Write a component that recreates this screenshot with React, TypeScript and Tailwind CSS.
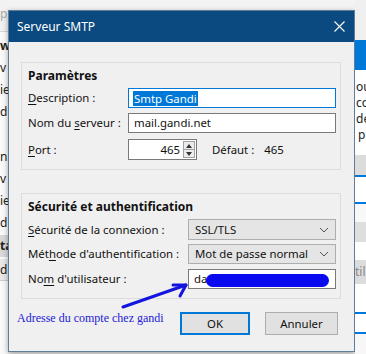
import React from "react";

const ui = { fontFamily: '"Noto Sans", "Open Sans", sans-serif' };

function Key({ children }: { children: React.ReactNode }) {
  return <span className="underline underline-offset-2">{children}</span>;
}

function Chevron() {
  return (
    <svg width="10" height="6" viewBox="0 0 10 6" className="ml-auto shrink-0">
      <path d="M1 1 L5 5 L9 1" fill="none" stroke="#555" strokeWidth="1" />
    </svg>
  );
}

function Select({ value, h }: { value: string; h: string }) {
  return (
    <div className={`flex items-center w-[148px] ${h} bg-[#e5e5e5] border border-[#adadad] pl-[6px] pr-[6px] text-[#111]`}>
      <span className="whitespace-nowrap">{value}</span>
      <Chevron />
    </div>
  );
}

function BgLeft() {
  const rows: [number, string, string][] = [
    [22, "ws", "font-bold"],
    [22, "v", ""],
    [22, "ie", ""],
    [22, "dr", ""],
    [45, "n", ""],
    [22, "v", ""],
    [22, "ie", ""],
    [22, "dr", ""],
  ];
  return (
    <div className="w-[8px] h-full bg-[#fafafa] overflow-hidden flex flex-col text-[12px] text-[#222] leading-[16px]" style={ui}>
      <div className="h-[32px] bg-[#f2f2f2] border-b border-[#d8d8d8] text-[#aaa] pt-[6px]">pt</div>
      <div className="flex flex-col">
        {rows.map(([h, t, c], i) => (
          <div key={i} className={`flex items-end ${c}`} style={{ height: h }}>
            {t}
          </div>
        ))}
      </div>
      <div className="h-[22px] flex items-center mt-[4px] bg-[#d9d9d9] font-bold">ta</div>
      <div className="h-[22px] flex items-center mt-[2px] bg-[#e8e8e8] border-b border-[#ccc]">de</div>
    </div>
  );
}

function BgRight() {
  return (
    <div className="w-[11px] h-full bg-[#f7f7f7] overflow-hidden flex flex-col text-[12px] text-[#222] leading-[16px]" style={ui}>
      <div className="h-[40px] bg-[#f0f0f0]" />
      <div className="h-[30px] bg-[#0078d7]" />
      <div className="bg-white pt-[9px] pl-[1px] pb-[12px] flex flex-col">
        <div>ou</div>
        <div>co</div>
        <div>de</div>
        <div className="pl-[2px]">p</div>
      </div>
      <div className="h-[22px] bg-[#dcdcdc] border-b-2 border-[#0078d7]" />
      <div className="h-[27px] bg-white border-b-2 border-[#0078d7]" />
      <div className="h-[18px] bg-[#f8f8f8]" />
      <div className="h-[20px] bg-[#dedede]" />
      <div className="h-[18px] bg-white" />
      <div className="h-[24px] bg-[#dcdcdc] text-[#888] flex items-center">til</div>
      <div className="h-[30px] bg-white border-b-2 border-[#0078d7]" />
      <div className="h-[20px] bg-white border-b-2 border-[#0078d7]" />
    </div>
  );
}

export default function App() {
  return (
    <div className="w-[366px] h-[354px] flex overflow-hidden bg-[#f3f3f3] relative">
      <BgLeft />

      {/* dialog */}
      <div className="w-[347px] mt-[10px] h-[342px] flex flex-col border border-[#5f7d9c] bg-[#f0f0f0] shadow-[0_2px_6px_rgba(0,0,0,0.35)]" style={ui}>
        {/* title bar */}
        <div className="h-[31px] bg-[#0a4a80] flex items-center pl-[8px] pr-[9px] text-white text-[12px]">
          <span>Serveur SMTP</span>
          <svg width="11" height="11" viewBox="0 0 11 11" className="ml-auto">
            <path d="M0.5 0.5 L10.5 10.5 M10.5 0.5 L0.5 10.5" stroke="white" strokeWidth="1.1" />
          </svg>
        </div>

        <div className="flex flex-col px-[12px] pt-[20px] text-[11.4px] text-[#111]">
          {/* group 1 */}
          <div className="w-[320px] h-[108px] border border-[#dcdcdc] flex flex-col pl-[6px] pr-[4px] pt-[5px]">
            <div className="h-[16px] leading-[16px] font-bold text-[12px]">Paramètres</div>
            <div className="h-[20px] mt-[4px] flex items-center">
              <span className="w-[100px]"><Key>D</Key>escription :</span>
              <div className="flex-1 h-full border border-[#0078d7] bg-white flex items-center pl-[4px]">
                <span className="bg-[#0078d7] text-white px-[1px] leading-[15px]">Smtp Gandi</span>
              </div>
            </div>
            <div className="h-[20px] mt-[5px] flex items-center">
              <span className="w-[100px]">Nom du <Key>s</Key>erveur :</span>
              <div className="flex-1 h-full border border-[#7a7a7a] bg-white flex items-center pl-[5px]">mail.gandi.net</div>
            </div>
            <div className="h-[21px] mt-[6px] flex items-center">
              <span className="w-[100px]"><Key>P</Key>ort :</span>
              <div className="w-[69px] h-full border border-[#7a7a7a] bg-white flex items-center justify-end pr-[1px]">
                <span className="mr-[3px]">465</span>
                <div className="w-[12px] h-[17px] flex flex-col border border-[#a0a0a0] bg-[#ececec]">
                  <div className="flex-1 flex items-center justify-center border-b border-[#a0a0a0]">
                    <svg width="6" height="4" viewBox="0 0 6 4"><path d="M0 4 L3 0 L6 4 Z" fill="#333" /></svg>
                  </div>
                  <div className="flex-1 flex items-center justify-center">
                    <svg width="6" height="4" viewBox="0 0 6 4"><path d="M0 0 L3 4 L6 0 Z" fill="#333" /></svg>
                  </div>
                </div>
              </div>
              <span className="ml-[15px]">Défaut :</span>
              <span className="ml-[10px]">465</span>
            </div>
          </div>

          {/* group 2 */}
          <div className="w-[320px] h-[106px] mt-[23px] border border-[#dcdcdc] flex flex-col pl-[6px] pr-[4px] pt-[5px]">
            <div className="h-[16px] leading-[16px] font-bold text-[12px]">Sécurité et authentification</div>
            <div className="h-[21px] mt-[4px] flex items-center">
              <span className="w-[160px]"><Key>S</Key>écurité de la connexion :</span>
              <Select value="SSL/TLS" h="h-[21px]" />
            </div>
            <div className="h-[20px] mt-[4px] flex items-center">
              <span className="w-[160px]">Mét<Key>h</Key>ode d'authentification :</span>
              <Select value="Mot de passe normal" h="h-[20px]" />
            </div>
            <div className="h-[20px] mt-[5px] flex items-center">
              <span className="w-[160px]">No<Key>m</Key> d'utilisateur :</span>
              <div className="relative w-[148px] h-full border border-[#7a7a7a] bg-white flex items-center pl-[5px]">
                da
                <div className="absolute left-[17px] top-[4px] w-[123px] h-[13px] rounded-full bg-[#0a0af0]" />
              </div>
            </div>
          </div>

          {/* buttons */}
          <div className="flex mt-[13px] pl-[159px] gap-[15px]">
            <div className="w-[70px] h-[23px] border-2 border-[#0078d7] bg-[#e1e1e1] flex items-center justify-center">OK</div>
            <div className="w-[73px] h-[23px] border border-[#adadad] bg-[#e1e1e1] flex items-center justify-center">Annuler</div>
          </div>
        </div>
      </div>

      <BgRight />

      {/* annotation */}
      <div className="absolute left-[17px] top-[310px] text-[12px] text-[#2020d8] leading-[16px]" style={{ fontFamily: '"Liberation Serif", serif' }}>
        Adresse du compte chez gandi
      </div>
      <svg className="absolute left-0 top-0 pointer-events-none" width="366" height="354" viewBox="0 0 366 354">
        <path d="M123 307 L186 285" stroke="#1414e0" strokeWidth="3" strokeLinecap="round" fill="none" />
        <path d="M173 285 L186 285 L180 296" stroke="#1414e0" strokeWidth="3" strokeLinecap="round" strokeLinejoin="round" fill="none" />
      </svg>
    </div>
  );
}
